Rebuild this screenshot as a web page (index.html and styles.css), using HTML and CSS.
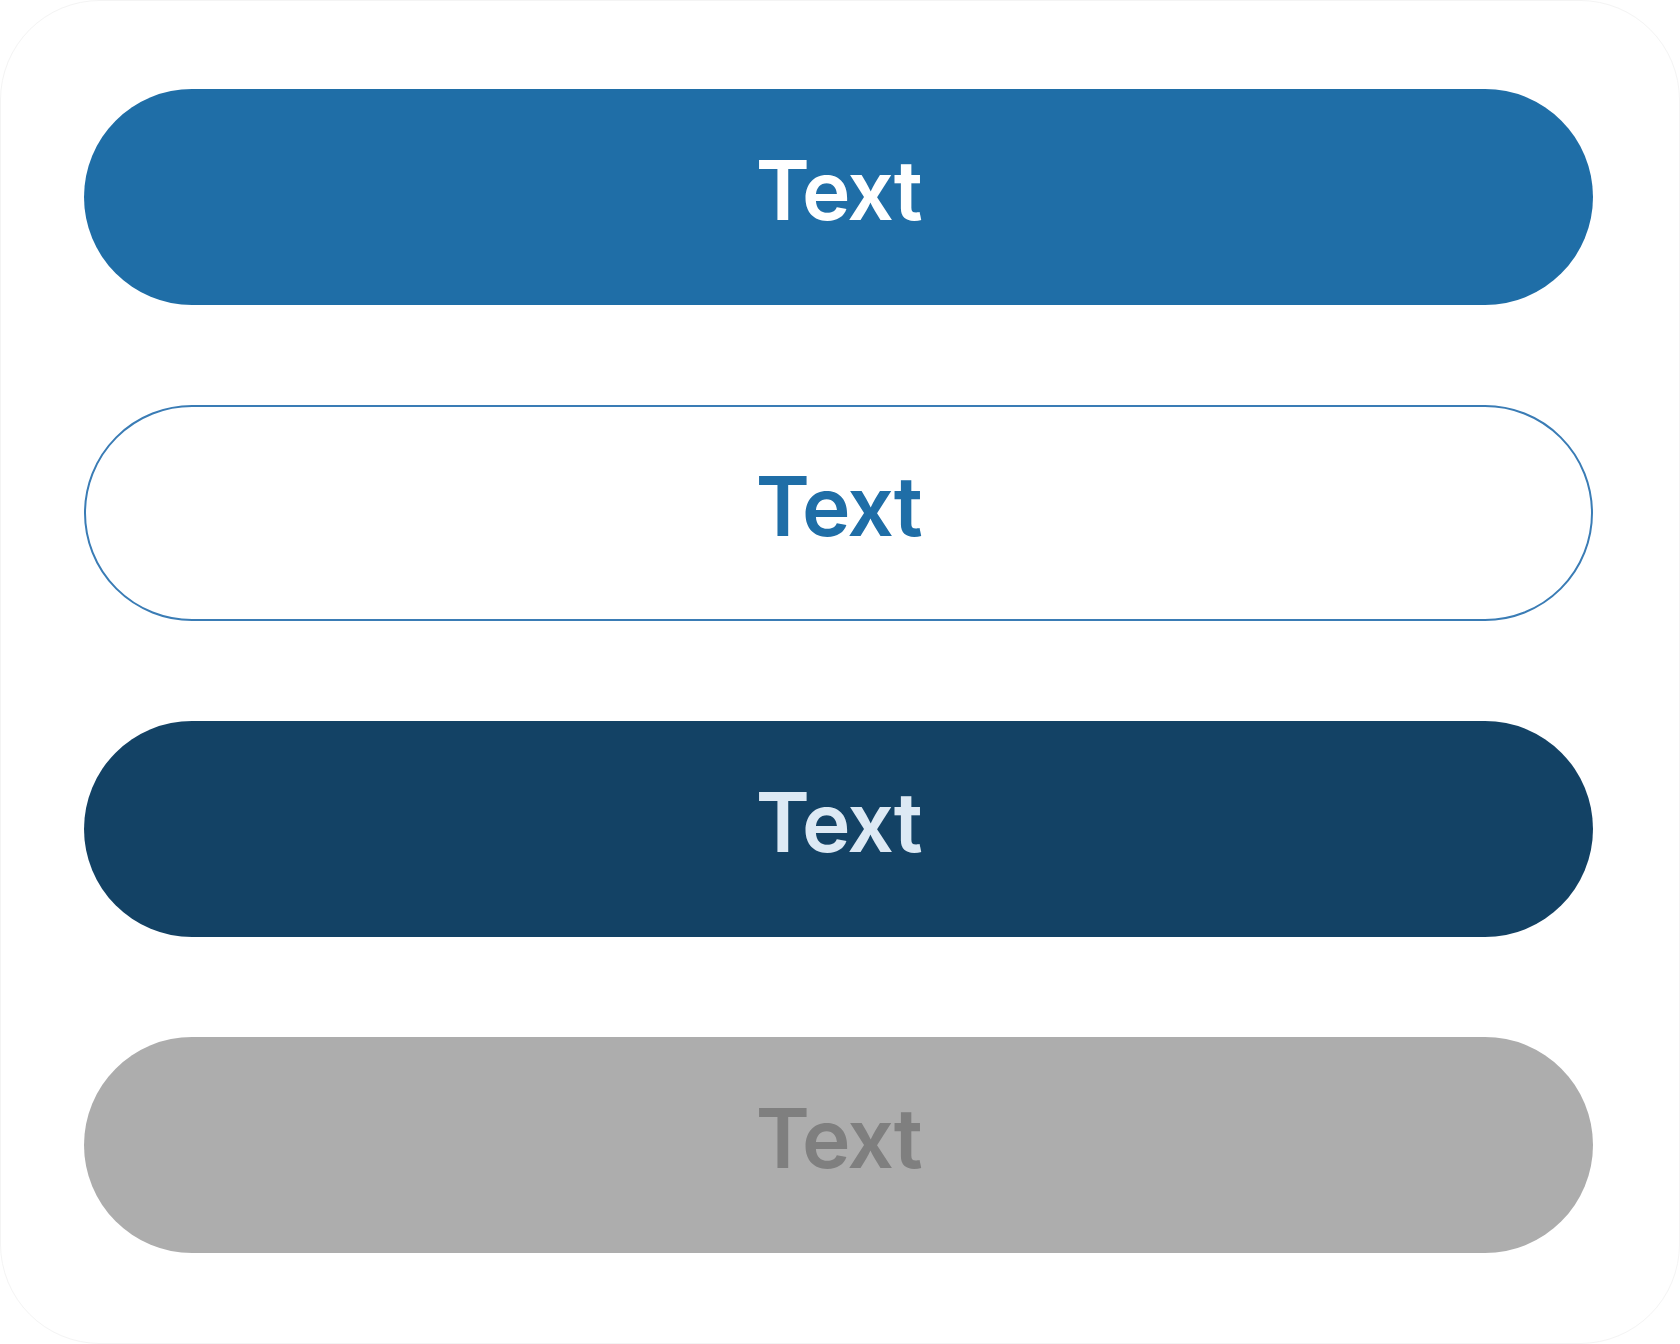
FILE: index.html
```html
<!DOCTYPE html>
<html>
<head>
<meta charset="utf-8">
<link rel="stylesheet" href="styles.css">
</head>
<body>
<div class="card">
  <div class="btn btn-primary">Text</div>
  <div class="btn btn-outline">Text</div>
  <div class="btn btn-pressed">Text</div>
  <div class="btn btn-disabled">Text</div>
</div>
</body>
</html>
```
FILE: styles.css
```css
html, body {
  margin: 0;
  padding: 0;
  background: #ffffff;
}
.card {
  box-sizing: border-box;
  width: 1680px;
  height: 1344px;
  border: 1px solid #f4f4f4;
  border-radius: 100px;
  padding: 88px 86px 0 83px;
  display: flex;
  flex-direction: column;
  gap: 100px;
  background: #ffffff;
}
.btn {
  box-sizing: border-box;
  height: 216px;
  border-radius: 108px;
  display: flex;
  align-items: center;
  justify-content: center;
  font-family: Inter, "Noto Sans", sans-serif;
  font-weight: 600;
  font-size: 82px;
  letter-spacing: -1.5px;
  padding-bottom: 14px;
}
.btn-primary {
  background: #1f6ea7;
  color: #ffffff;
}
.btn-outline {
  background: #ffffff;
  border: 2px solid #3a7cb5;
  color: #1f6ea7;
}
.btn-pressed {
  background: #134265;
  color: #dde9f4;
}
.btn-disabled {
  background: #adadad;
  color: #7f7f7f;
}
```
